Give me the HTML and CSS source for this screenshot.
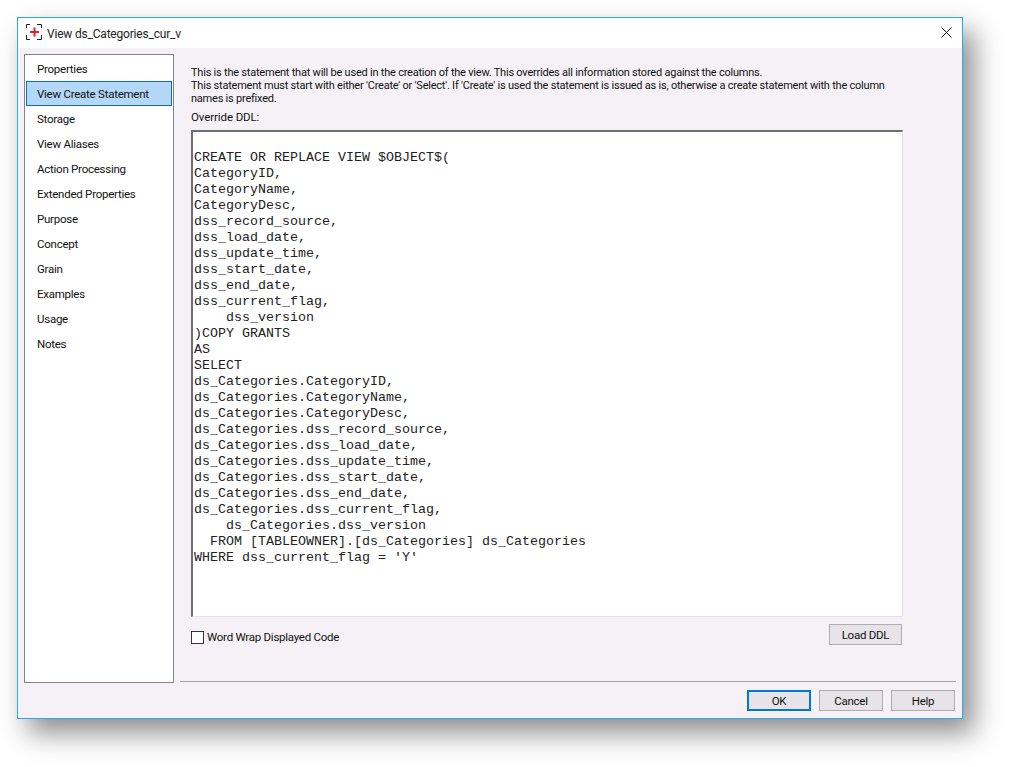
FILE: index.html
```html
<!DOCTYPE html>
<html lang="en">
<head>
<meta charset="utf-8">
<title>View ds_Categories_cur_v</title>
<link rel="stylesheet" href="styles.css">
</head>
<body>
<div class="dialog">
  <header class="titlebar">
    <svg class="app-icon" width="18" height="18" viewBox="0 0 18 18">
      <path class="bracket" d="M1.5 5V1.5H5M12 1.5h4.5V5M1.5 12v4.5H5M12 16.5h4.5V12"/>
      <path class="plus" d="M9.5 4.5v9M5 9h9"/>
    </svg>
    <span class="title">View ds_Categories_cur_v</span>
    <svg class="close" width="11" height="11" viewBox="0 0 11 11"><path d="M.5.5l10 10M10.5.5l-10 10"/></svg>
  </header>
  <div class="content">
    <div class="main">
      <nav class="nav">
        <div class="nav-item">Properties</div>
        <div class="nav-item selected">View Create Statement</div>
        <div class="nav-item">Storage</div>
        <div class="nav-item">View Aliases</div>
        <div class="nav-item">Action Processing</div>
        <div class="nav-item">Extended Properties</div>
        <div class="nav-item">Purpose</div>
        <div class="nav-item">Concept</div>
        <div class="nav-item">Grain</div>
        <div class="nav-item">Examples</div>
        <div class="nav-item">Usage</div>
        <div class="nav-item">Notes</div>
      </nav>
      <section class="panel">
        <p class="intro">This is the statement that will be used in the creation of the view. This overrides all information stored against the columns.<br>This statement must start with either 'Create' or 'Select'. If 'Create' is used the statement is issued as is, otherwise a create statement with the column<br>names is prefixed.</p>
        <div class="label">Override DDL:</div>
        <pre class="code">

CREATE OR REPLACE VIEW $OBJECT$(
CategoryID,
CategoryName,
CategoryDesc,
dss_record_source,
dss_load_date,
dss_update_time,
dss_start_date,
dss_end_date,
dss_current_flag,
    dss_version
)COPY GRANTS
AS
SELECT
ds_Categories.CategoryID,
ds_Categories.CategoryName,
ds_Categories.CategoryDesc,
ds_Categories.dss_record_source,
ds_Categories.dss_load_date,
ds_Categories.dss_update_time,
ds_Categories.dss_start_date,
ds_Categories.dss_end_date,
ds_Categories.dss_current_flag,
    ds_Categories.dss_version
  FROM [TABLEOWNER].[ds_Categories] ds_Categories
WHERE dss_current_flag = 'Y'</pre>
        <div class="code-actions">
          <label class="wrap"><span class="checkbox"></span>Word Wrap Displayed Code</label>
          <button class="btn load">Load DDL</button>
        </div>
      </section>
    </div>
    <footer class="footer">
      <button class="btn primary">OK</button>
      <button class="btn">Cancel</button>
      <button class="btn">Help</button>
    </footer>
  </div>
</div>
</body>
</html>
```
FILE: styles.css
```css
* { box-sizing: border-box; }
html, body { margin: 0; height: 100%; background: #fff; overflow: hidden; }
body {
  padding: 17px 0 0 17px;
  font-family: "Roboto", "Open Sans", sans-serif;
  font-size: 11.5px;
  letter-spacing: -0.25px;
  color: #111;
}
.dialog {
  width: 946px;
  height: 702px;
  border: 1px solid #1fb0e6;
  background: #f5f1f6;
  display: flex;
  flex-direction: column;
  box-shadow: 11px 14px 26px 0 rgba(0, 0, 0, 0.45);
}
.titlebar {
  height: 30px;
  flex: none;
  background: #fff;
  display: flex;
  align-items: center;
  padding: 0 10px 2px 7px;
}
.app-icon { flex: none; }
.bracket { fill: none; stroke: #222; stroke-width: 1; }
.plus { fill: none; stroke: #d8232a; stroke-width: 2; }
.title { margin-left: 4px; padding-top: 3px; font-size: 12px; letter-spacing: -0.2px; flex: 1; color: #222; }
.close { flex: none; }
.close path { stroke: #111; stroke-width: 1; fill: none; }
.content { flex: 1; display: flex; flex-direction: column; padding: 6px; min-height: 0; }
.main { flex: 1; display: flex; min-height: 0; }
.nav {
  width: 150px;
  flex: none;
  height: 629px;
  background: #fff;
  border: 1px solid #83838f;
  padding: 1px;
  margin-right: 17px;
}
.nav-item { height: 25px; line-height: 23px; padding: 1px 0 0 10px; border: 1px solid transparent; }
.nav-item.selected { background: #b5d7f7; border-color: #0b6fb8; }
.panel { width: 712px; flex: none; padding-top: 12px; }
.intro { margin: 0; line-height: 13px; font-size: 11px; letter-spacing: -0.22px; white-space: nowrap; }
.label { margin-top: 4px; line-height: 16px; height: 21px; letter-spacing: -0.1px; }
.code {
  margin: 0;
  height: 487px;
  background: #fff;
  border-style: solid;
  border-width: 2px 1px 1px 2px;
  border-color: #6e6e6e #e3e1e6 #e3e1e6 #6e6e6e;
  padding: 2px 0 0 1px;
  font-family: "Liberation Mono", monospace;
  font-size: 13.33px;
  letter-spacing: 0;
  line-height: 16px;
  color: #222;
  overflow: hidden;
}
.code-actions { display: flex; justify-content: space-between; align-items: flex-start; padding-top: 7px; }
.wrap { display: flex; align-items: center; margin-top: 6px; }
.checkbox { width: 13px; height: 13px; border: 1px solid #333; background: #fff; margin-right: 3px; }
.btn {
  font: inherit;
  letter-spacing: inherit;
  color: #111;
  background: #e7e3e8;
  border: 1px solid #adadad;
  height: 21px;
  width: 64px;
  padding: 0;
  margin-left: 8px;
}
.load { width: 73px; margin-right: 1px; }
.footer {
  flex: none;
  height: 31px;
  margin-left: 156px;
  border-top: 1px solid #a0a0a6;
  padding: 8px 1px 0 0;
  display: flex;
  justify-content: flex-end;
}
.btn.primary { border: 2px solid #0078d7; }
```
